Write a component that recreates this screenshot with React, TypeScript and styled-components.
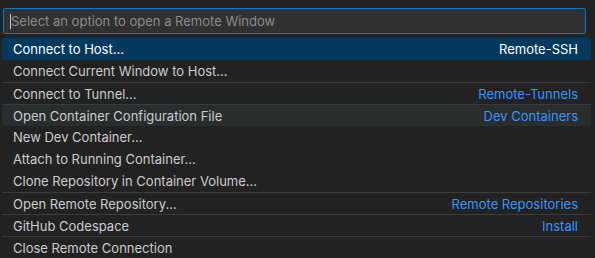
import styled, { createGlobalStyle } from 'styled-components';

const GlobalStyle = createGlobalStyle`
    html, body {
        margin: 0;
        padding: 0;
        background: #222222;
    }
`;

type Item = {
    label: string;
    detail?: string;
    separator?: boolean;
    selected?: boolean;
    hovered?: boolean;
};

const items: Item[] = [
    { label: 'Connect to Host...', detail: 'Remote-SSH', selected: true },
    { label: 'Connect Current Window to Host...' },
    { label: 'Connect to Tunnel...', detail: 'Remote-Tunnels', separator: true },
    { label: 'Open Container Configuration File', detail: 'Dev Containers', separator: true, hovered: true },
    { label: 'New Dev Container...' },
    { label: 'Attach to Running Container...' },
    { label: 'Clone Repository in Container Volume...' },
    { label: 'Open Remote Repository...', detail: 'Remote Repositories', separator: true },
    { label: 'GitHub Codespace', detail: 'Install', separator: true },
    { label: 'Close Remote Connection', separator: true },
];

function App() {
    return (
        <Picker>
            <GlobalStyle />
            <InputBox>
                <Caret />
                <Placeholder>Select an option to open a Remote Window</Placeholder>
            </InputBox>
            <List>
                {items.map((item, index) => (
                    <Row key={index} $separator={item.separator} $selected={item.selected} $hovered={item.hovered}>
                        <Label>{item.label}</Label>
                        {item.detail && <Detail $selected={item.selected}>{item.detail}</Detail>}
                    </Row>
                ))}
            </List>
        </Picker>
    );
}

const Picker = styled.div`
    width: 595px;
    height: 258px;
    overflow: hidden;
    background: #222222;
    font-family: Inter, 'Liberation Sans', sans-serif;
    font-size: 13px;
    color: #cccccc;
`;

const InputBox = styled.div`
    display: flex;
    align-items: center;
    margin: 8px 9px 0 3px;
    height: 26px;
    box-sizing: border-box;
    padding-left: 6px;
    background: #313131;
    border: 1px solid #0078d4;
    border-radius: 2px;
`;

const Caret = styled.div`
    width: 1px;
    height: 15px;
    background: #cccccc;
`;

const Placeholder = styled.span`
    color: #8b8b8b;
`;

const List = styled.div`
    margin-top: 4px;
    padding: 0 4px 0 2px;
`;

const Row = styled.div<{ $separator?: boolean; $selected?: boolean; $hovered?: boolean }>`
    display: flex;
    justify-content: space-between;
    align-items: center;
    height: 22px;
    box-sizing: border-box;
    padding: 0 13px 0 11px;
    border-radius: 3px;
    color: ${(p) => (p.$selected ? '#ffffff' : '#cccccc')};
    background: ${(p) => (p.$selected ? '#04395e' : p.$hovered ? '#2a2d2e' : 'transparent')};
    border-top: ${(p) => (p.$separator ? '1px solid #3c3c3c' : 'none')};
    ${(p) => p.$separator && 'border-top-left-radius: 0; border-top-right-radius: 0;'}
`;

const Label = styled.span`
    white-space: nowrap;
`;

const Detail = styled.span<{ $selected?: boolean }>`
    color: ${(p) => (p.$selected ? '#ffffff' : '#3794ff')};
    white-space: nowrap;
`;

export default App;
